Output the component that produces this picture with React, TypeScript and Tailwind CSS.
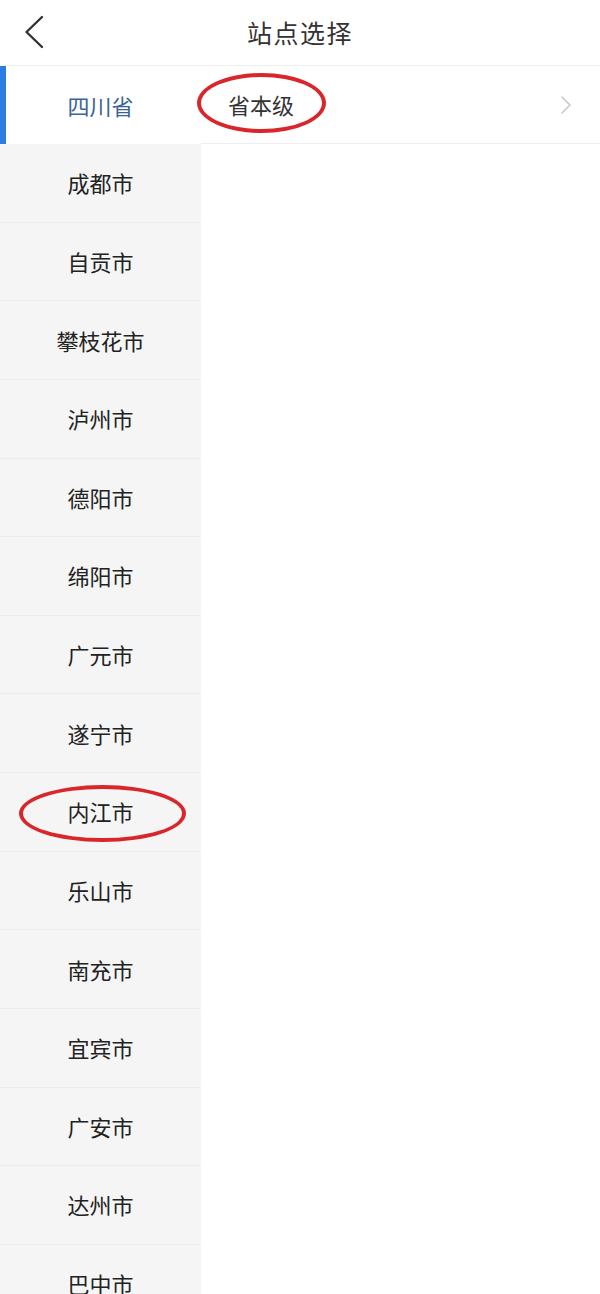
import React from "react";

const cities = [
  "成都市",
  "自贡市",
  "攀枝花市",
  "泸州市",
  "德阳市",
  "绵阳市",
  "广元市",
  "遂宁市",
  "内江市",
  "乐山市",
  "南充市",
  "宜宾市",
  "广安市",
  "达州市",
  "巴中市",
  "雅安市",
  "眉山市",
];

const font = { fontFamily: '"Noto Sans CJK SC", "Noto Sans", sans-serif' };

const App = () => {
  return (
    <div className="w-[600px] h-[1294px] overflow-hidden bg-white" style={font}>
      {/* header */}
      <div className="relative flex items-center justify-center h-[66px] border-b border-[#efefef]">
        <svg
          className="absolute left-[22px] top-[14px]"
          width="24"
          height="36"
          viewBox="0 0 24 36"
          fill="none"
        >
          <path d="M20 3 L4.5 18 L20 33" stroke="#333" strokeWidth="2.4" strokeLinecap="round" strokeLinejoin="round" />
        </svg>
        <h1 className="text-[25px] text-[#333] tracking-[1.5px]">站点选择</h1>
      </div>

      <div className="flex">
        {/* province / city column */}
        <div className="w-[201px] bg-[#f5f5f5] flex flex-col">
          <div className="relative h-[78px] bg-white flex items-center justify-center">
            <div className="absolute left-0 top-0 bottom-0 w-[6px] bg-[#2b7de0]" />
            <span className="text-[22px] text-[#3a6597]">四川省</span>
          </div>
          {cities.map((c) => (
            <div
              key={c}
              className="relative h-[78.64px] flex items-center justify-center border-b border-[#ececec]"
            >
              <span className="text-[22px] text-[#222]">{c}</span>
              {c === "内江市" && (
                <div className="absolute left-[19px] top-[12px] w-[167px] h-[57px] rounded-[50%] border-[4px] border-[#d9262b]" />
              )}
            </div>
          ))}
        </div>

        {/* sub list */}
        <div className="flex-1 flex flex-col">
          <div className="relative h-[78px] flex items-center justify-between pl-[27px] pr-[28px] border-b border-[#efefef]">
            <span className="text-[22px] text-[#333]">省本级</span>
            <div className="absolute left-[-4px] top-[7px] w-[129px] h-[60px] rounded-[50%] border-[4px] border-[#d9262b]" />
            <svg width="12" height="20" viewBox="0 0 12 20" fill="none">
              <path d="M2 2 L10 10 L2 18" stroke="#c8c8c8" strokeWidth="1.6" strokeLinecap="round" strokeLinejoin="round" />
            </svg>
          </div>
        </div>
      </div>
    </div>
  );
};

export default App;
